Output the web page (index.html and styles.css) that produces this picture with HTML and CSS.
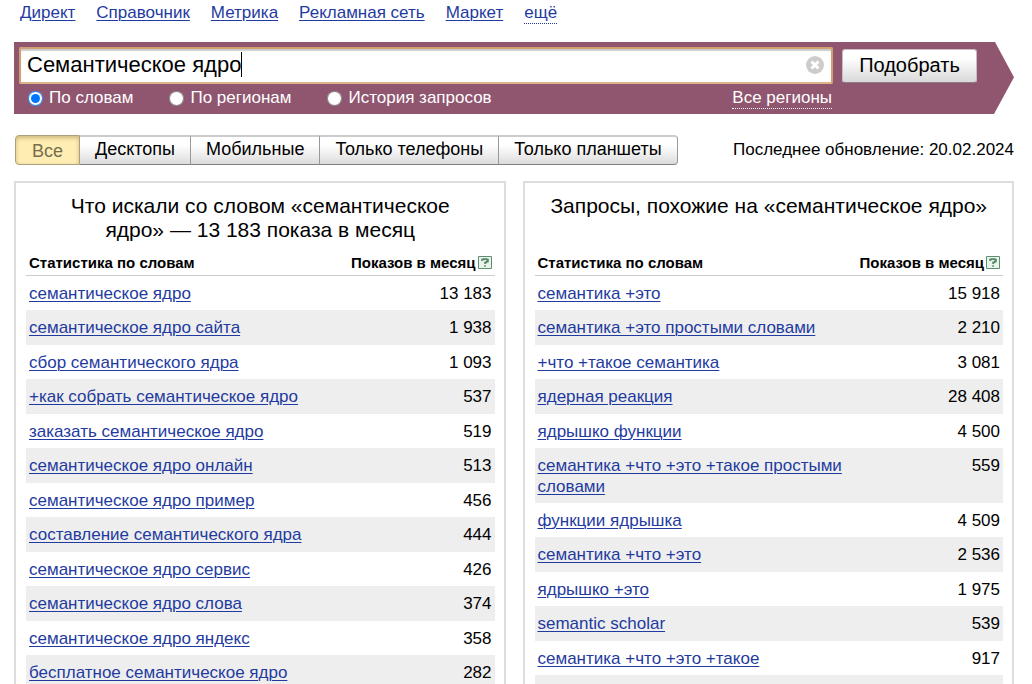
FILE: index.html
```html
<!DOCTYPE html>
<html lang="ru">
<head>
<meta charset="utf-8">
<title>Подбор слов</title>
<link rel="stylesheet" href="styles.css">
</head>
<body>
<nav class="services">
  <a href="#">Директ</a>
  <a href="#">Справочник</a>
  <a href="#">Метрика</a>
  <a href="#">Рекламная сеть</a>
  <a href="#">Маркет</a>
  <a href="#" class="more">ещё</a>
</nav>

<form class="search">
  <div class="search-main">
    <div class="field">
      <input class="query" type="text" value="Семантическое ядро" aria-label="Запрос">
      <span class="caret"></span>
      <button class="clear" type="button" aria-label="Очистить">
        <svg viewBox="0 0 18 18" width="18" height="18"><circle cx="9" cy="9" r="9" fill="#ccc"/><path d="M5.500 5.500l7 7M12.500 5.500l-7 7" stroke="#fff" stroke-width="3"/></svg>
      </button>
    </div>
    <div class="options">
      <label class="option"><input type="radio" name="mode" checked>По словам</label>
      <label class="option"><input type="radio" name="mode">По регионам</label>
      <label class="option"><input type="radio" name="mode">История запросов</label>
      <a href="#" class="regions">Все регионы</a>
    </div>
  </div>
  <button class="submit" type="button">Подобрать</button>
</form>

<div class="toolbar">
  <div class="tabs">
    <button class="tab active" type="button">Все</button>
    <button class="tab" type="button">Десктопы</button>
    <button class="tab" type="button">Мобильные</button>
    <button class="tab" type="button">Только телефоны</button>
    <button class="tab" type="button">Только планшеты</button>
  </div>
  <div class="updated">Последнее обновление: 20.02.2024</div>
</div>

<main class="panels">
  <section class="panel">
    <h2 class="title">Что искали со словом «семантическое ядро» — 13 183 показа в месяц</h2>
    <table class="stats">
      <thead><tr><th>Статистика по словам</th><th class="num"><span class="count-head">Показов в месяц<a href="#" class="help" aria-label="Справка"><svg viewBox="0 0 14 13" width="14" height="13"><path d="M.5.5h13v12H.5z" fill="#e9f3e9" stroke="#5c8f70"/><path d="M4 5V3.500h1.500V3h3v.5H10v2H8.500v1H7V8" fill="none" stroke="#4f8064" stroke-width="1.500"/><path d="M6.200 9.200h1.600v1.600H6.200z" fill="#4f8064"/></svg></a></span></th></tr></thead>
      <tbody>
        <tr><td><a href="#">семантическое ядро</a></td><td class="num">13 183</td></tr>
        <tr><td><a href="#">семантическое ядро сайта</a></td><td class="num">1 938</td></tr>
        <tr><td><a href="#">сбор семантического ядра</a></td><td class="num">1 093</td></tr>
        <tr><td><a href="#">+как собрать семантическое ядро</a></td><td class="num">537</td></tr>
        <tr><td><a href="#">заказать семантическое ядро</a></td><td class="num">519</td></tr>
        <tr><td><a href="#">семантическое ядро онлайн</a></td><td class="num">513</td></tr>
        <tr><td><a href="#">семантическое ядро пример</a></td><td class="num">456</td></tr>
        <tr><td><a href="#">составление семантического ядра</a></td><td class="num">444</td></tr>
        <tr><td><a href="#">семантическое ядро сервис</a></td><td class="num">426</td></tr>
        <tr><td><a href="#">семантическое ядро слова</a></td><td class="num">374</td></tr>
        <tr><td><a href="#">семантическое ядро яндекс</a></td><td class="num">358</td></tr>
        <tr><td><a href="#">бесплатное семантическое ядро</a></td><td class="num">282</td></tr>
      </tbody>
    </table>
  </section>
  <section class="panel">
    <h2 class="title">Запросы, похожие на «семантическое ядро»</h2>
    <table class="stats">
      <thead><tr><th>Статистика по словам</th><th class="num"><span class="count-head">Показов в месяц<a href="#" class="help" aria-label="Справка"><svg viewBox="0 0 14 13" width="14" height="13"><path d="M.5.5h13v12H.5z" fill="#e9f3e9" stroke="#5c8f70"/><path d="M4 5V3.500h1.500V3h3v.5H10v2H8.500v1H7V8" fill="none" stroke="#4f8064" stroke-width="1.500"/><path d="M6.200 9.200h1.600v1.600H6.200z" fill="#4f8064"/></svg></a></span></th></tr></thead>
      <tbody>
        <tr><td><a href="#">семантика +это</a></td><td class="num">15 918</td></tr>
        <tr><td><a href="#">семантика +это простыми словами</a></td><td class="num">2 210</td></tr>
        <tr><td><a href="#">+что +такое семантика</a></td><td class="num">3 081</td></tr>
        <tr><td><a href="#">ядерная реакция</a></td><td class="num">28 408</td></tr>
        <tr><td><a href="#">ядрышко функции</a></td><td class="num">4 500</td></tr>
        <tr><td><a href="#">семантика +что +это +такое простыми словами</a></td><td class="num">559</td></tr>
        <tr><td><a href="#">функции ядрышка</a></td><td class="num">4 509</td></tr>
        <tr><td><a href="#">семантика +что +это</a></td><td class="num">2 536</td></tr>
        <tr><td><a href="#">ядрышко +это</a></td><td class="num">1 975</td></tr>
        <tr><td><a href="#">semantic scholar</a></td><td class="num">539</td></tr>
        <tr><td><a href="#">семантика +что +это +такое</a></td><td class="num">917</td></tr>
        <tr><td></td><td class="num"></td></tr>
      </tbody>
    </table>
  </section>
</main>
</body>
</html>
```

FILE: styles.css
```css
* { box-sizing: border-box; }
html { height: 100%; overflow: hidden; }
body {
  margin: 0;
  padding: 0 18px 0 14px;
  height: 100%;
  overflow: hidden;
  background: #fff;
  color: #000;
  font: 17px/21px "Liberation Sans", Arial, sans-serif;
}
button, input { font-family: inherit; }
a { color: #1f3ba0; text-underline-offset: 2px; text-decoration-thickness: 1px; }

.services { display: flex; gap: 21px; padding: 2px 6px 0; height: 42px; align-items: flex-start; }
.services .more { text-decoration: none; border-bottom: 1px dotted #1f3ba0; }

.search {
  display: flex;
  gap: 9px;
  padding: 5px 37px 5px 5px;
  height: 72px;
  background: #90566f;
  clip-path: polygon(0 0, calc(100% - 19px) 0, 100% 49%, calc(100% - 20px) 100%, 0 100%);
}
.search-main { flex: 1; }
.field { position: relative; height: 37px; }
.query {
  width: 100%;
  height: 37px;
  padding: 0 40px 2px 6px;
  border: 2px solid #d0a070;
  border-bottom-color: #dcb488;
  border-radius: 2px;
  outline: none;
  background: #fff;
  box-shadow: inset 0 2px 1px #ccc;
  font-size: 22px;
  color: #000;
}
.caret { position: absolute; left: 222px; top: 5px; width: 1px; height: 25px; background: #000; }
.clear { position: absolute; right: 9px; top: 9px; padding: 0; border: 0; background: none; width: 18px; height: 18px; }
.clear svg, .help svg { display: block; }
.options { display: flex; align-items: center; gap: 36px; padding: 3px 1px 0 9px; color: #fff; }
.option { display: flex; align-items: center; gap: 6px; line-height: 20px; }
.option input { margin: 0; width: 15px; height: 15px; }
.regions { margin-left: auto; color: #fff; text-decoration: none; border-bottom: 1px dotted #fff; }
.submit {
  width: 135px;
  height: 34px;
  margin-top: 2px;
  padding: 0 0 2px;
  border: 1px solid #c9bcc2;
  border-bottom-color: #8d7c84;
  border-radius: 3px;
  background: linear-gradient(#fff 25%, #d9d9d9);
  font-size: 20px;
  color: #000;
}

.toolbar { display: flex; justify-content: space-between; align-items: center; padding-top: 21px; }
.tabs { display: flex; height: 30px; margin-left: 1px; }
.tab {
  padding: 0 15px 3px;
  border: 1px solid #999;
  border-top: 2px solid #ccc;
  border-left: 0;
  border-bottom-color: #808080;
  background: linear-gradient(#fff 30%, #dcdcdc);
  font-size: 18px;
  color: #000;
}
.tab.active {
  padding: 2px 16px 0;
  border: 1px solid #aea078;
  border-radius: 4px 0 0 4px;
  background: #ffeeb4;
  box-shadow: inset 0 2px 4px #c9b87c;
  color: #776d4d;
}
.tab:last-child { border-radius: 0 4px 4px 0; }
.updated { line-height: 28px; }

.panels { display: grid; grid-template-columns: 1fr 1fr; gap: 17px; margin-top: 16px; }
.panel { border: 2px solid #ddd; padding: 11px 9px 0 10px; }
.title { margin: 0; padding: 0 30px; height: 58px; font-size: 21px; line-height: 24px; font-weight: 400; text-align: center; }
.panel + .panel .title { padding: 0; }
.stats { width: 100%; border-collapse: collapse; }
.stats th { padding: 0 3px 1px; height: 23px; border-bottom: 1px solid #ccc; font-size: 15px; font-weight: 700; text-align: left; white-space: nowrap; }
.stats td { padding: 7px 3px 6px; height: 34px; vertical-align: top; }
.stats tbody tr:nth-child(even) td { height: 35px; background: #eee; }
.stats .num { width: 1px; text-align: right; white-space: nowrap; }
.count-head { display: flex; gap: 2px; align-items: center; }
```
